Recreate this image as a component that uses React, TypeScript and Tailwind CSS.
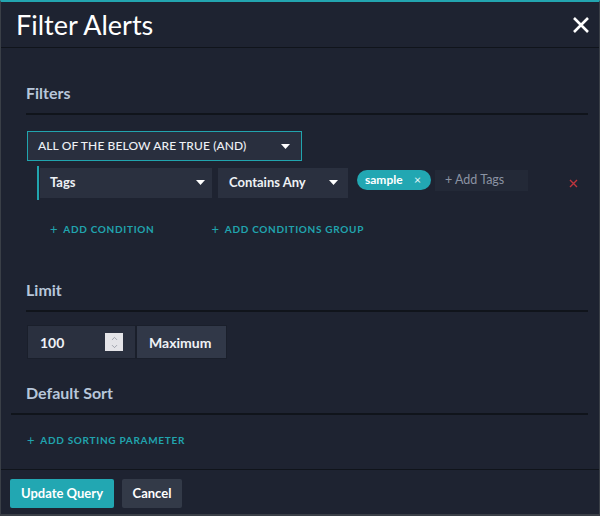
import { ChevronUp, ChevronDown } from "lucide-react";

const font = { fontFamily: "Lato, 'Noto Sans', sans-serif" };

function Caret() {
  return (
    <svg width="9" height="5" viewBox="0 0 9 5" className="fill-white">
      <path d="M0 0h9L4.5 5z" />
    </svg>
  );
}

function SectionTitle({ children, full }: { children: string; full?: boolean }) {
  return (
    <div>
      <h3 className="pl-[25px] text-[16px] font-bold leading-6 text-[#b7c6da]">{children}</h3>
      <div className={`mt-[8px] h-[2px] bg-[#10141b] ${full ? "ml-[10px]" : "ml-[25px]"} mr-[11px]`} />
    </div>
  );
}

function AddLink({ children }: { children: string }) {
  return (
    <button type="button" className="flex items-center gap-[5px] text-[10px] font-bold uppercase tracking-[0.07em] text-[#21a4ae]">
      <span className="text-[13px] font-normal leading-none">+</span>
      {children}
    </button>
  );
}

export default function App() {
  return (
    <div style={font} className="h-[516px] w-[600px] overflow-hidden border-x border-b-2 border-t-2 border-x-[#3a3f47] border-b-[#3a3f47] border-t-[#23a5b0] bg-[#1e2331]">
      {/* Header */}
      <div className="flex h-[46px] items-center justify-between border-b border-[#10141b] pl-[15px] pr-[9px]">
        <h2 className="text-[27px] leading-none text-white">Filter Alerts</h2>
        <svg width="18" height="18" viewBox="0 0 18 18" className="stroke-white" strokeWidth="2.6">
          <path d="M2 2l14 14M16 2L2 16" />
        </svg>
      </div>

      <div className="pt-[33px]">
        <SectionTitle>Filters</SectionTitle>

        <div className="mt-[16px] pl-[26px]">
          <div className="flex h-[30px] w-[275px] items-center justify-between border border-[#21a4ae] bg-[#292f3e] pl-[10px] pr-[11px]">
            <span className="text-[12px] font-medium tracking-[0.01em] text-[#eef1f5]">ALL OF THE BELOW ARE TRUE (AND)</span>
            <Caret />
          </div>

          <div className="mt-[5px] flex items-center pl-[10px]">
            <div className="flex h-[34px] items-center border-l-2 border-[#21a4ae] pl-px">
              <div className="-mt-[1px] flex h-[30px] w-[172px] items-center justify-between bg-[#2a303f] pl-[10px] pr-[7px]">
                <span className="text-[13px] font-bold text-[#eef1f5]">Tags</span>
                <Caret />
              </div>
              <div className="-mt-[1px] ml-[6px] flex h-[30px] w-[130px] items-center justify-between bg-[#2a303f] pl-[11px] pr-[10px]">
                <span className="text-[13px] font-bold text-[#eef1f5]">Contains Any</span>
                <Caret />
              </div>
              <div className="ml-[9px] mt-[4px] flex h-[20px] w-[74px] items-center justify-between self-start rounded-full bg-[#22a7b2] pl-[8px] pr-[10px]">
                <span className="text-[12px] font-bold text-white">sample</span>
                <span className="text-[12px] leading-none text-white/90">×</span>
              </div>
              <div className="ml-[4px] mt-[4px] flex h-[21px] w-[93px] items-center self-start bg-[#232937] pl-[10px]">
                <span className="text-[12.5px] text-[#8b93a3]">+ Add Tags</span>
              </div>
            </div>
            <svg width="9" height="9" viewBox="0 0 9 9" className="ml-[41px] stroke-[#c0353d]" strokeWidth="1.4">
              <path d="M1 1l7 7M8 1L1 8" />
            </svg>
          </div>

          <div className="mt-[22px] flex gap-[57px] pl-[23px]">
            <AddLink>Add Condition</AddLink>
            <AddLink>Add Conditions Group</AddLink>
          </div>
        </div>

        <div className="mt-[41px]">
          <SectionTitle>Limit</SectionTitle>
        </div>

        <div className="ml-[26px] mt-[13px] flex h-[34px]">
          <div className="flex w-[109px] items-center justify-between border border-[#1a1f2b] bg-[#2a303f] pl-[12px] pr-[12px]">
            <span className="text-[14px] font-bold text-[#eef1f5]">100</span>
            <div className="flex h-[18px] w-[18px] flex-col items-center justify-center bg-[#e4e4e8] text-[#8a8f99]">
              <ChevronUp size={9} strokeWidth={2} className="-mb-[1px]" />
              <ChevronDown size={9} strokeWidth={2} />
            </div>
          </div>
          <div className="flex w-[91px] items-center border border-[#1a1f2b] bg-[#313848] pl-[12px]">
            <span className="text-[14px] font-bold text-[#eef1f5]">Maximum</span>
          </div>
        </div>

        <div className="mt-[22px]">
          <SectionTitle full>Default Sort</SectionTitle>
        </div>

        <div className="mt-[18px] pl-[26px]">
          <AddLink>Add Sorting Parameter</AddLink>
        </div>
      </div>

      {/* Footer */}
      <div className="mt-[21px] flex gap-[8px] border-t border-[#10141b] pl-[9px] pt-[9px]">
        <button type="button" className="h-[29px] w-[104px] rounded-[2px] bg-[#22a7b2] text-[13px] font-bold text-white">
          Update Query
        </button>
        <button type="button" className="h-[29px] w-[60px] rounded-[2px] bg-[#333a48] text-[13px] font-bold text-white">
          Cancel
        </button>
      </div>
    </div>
  );
}
